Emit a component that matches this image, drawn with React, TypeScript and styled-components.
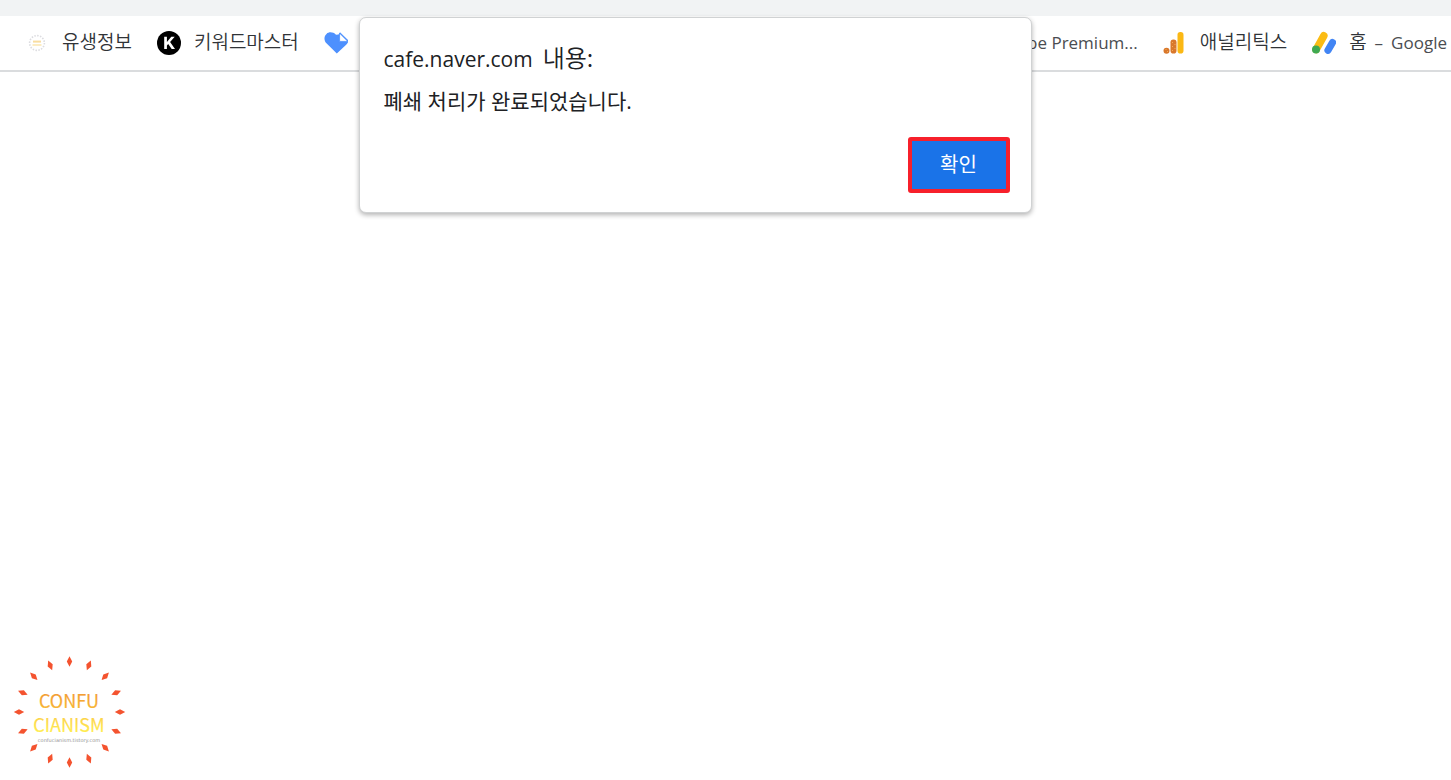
import React from "react";
import styled, { createGlobalStyle } from "styled-components";

const GlobalStyle = createGlobalStyle`
  *, *::before, *::after { box-sizing: border-box; }
  body {
    margin: 0;
    background: #ffffff;
    color: #202124;
    font-family: "Open Sans", "Noto Sans CJK KR", sans-serif;
  }
`;

const Page = styled.div`
  position: relative;
  display: flex;
  flex-direction: column;
  min-height: 100vh;
  overflow: hidden;
`;

const ToolbarEdge = styled.div`
  height: 16px;
  background: #f1f3f4;
`;

const BookmarkBar = styled.nav`
  display: flex;
  justify-content: space-between;
  align-items: center;
  height: 56px;
  padding: 0 4px 0 25px;
  border-bottom: 2px solid #dadcde;
`;

const BookmarkGroup = styled.div`
  display: flex;
  align-items: center;
  gap: 25px;
`;

const Bookmark = styled.a`
  display: flex;
  align-items: center;
  gap: 13px;
  color: #4a4d51;
  font-size: 17px;
  font-weight: 400;
  line-height: 24px;
  text-decoration: none;
  white-space: nowrap;
`;

const Korean = styled.span`
  padding-bottom: 4px;
  color: #303337;
  font-family: "Noto Sans CJK KR", sans-serif;
  font-size: 19px;
  font-weight: 350;
`;

const MixedLabel = styled.span`
  display: flex;
  align-items: center;
  gap: 8px;
`;

const Icon = styled.svg`
  display: block;
  flex: none;
  width: 24px;
  height: 24px;
`;

const Dialog = styled.section`
  position: absolute;
  top: 17px;
  left: calc(50% - 367px);
  width: 673px;
  max-width: 100%;
  padding: 24px 21px 19px 24px;
  background: #ffffff;
  border: 1px solid #d0d2d3;
  border-radius: 7px;
  box-shadow: 0 2px 5px rgba(0, 0, 0, 0.3);
`;

const DialogTitle = styled.h1`
  display: flex;
  align-items: baseline;
  gap: 10px;
  height: 30px;
  margin: 0 0 14px;
  font-size: 21px;
  font-weight: 400;
  line-height: 30px;
`;

const TitleKorean = styled.span`
  font-family: "Noto Sans CJK KR", sans-serif;
  font-size: 24px;
  font-weight: 350;
`;

const DialogMessage = styled.p`
  margin: 0 0 21px;
  font-size: 21px;
  font-weight: 400;
  line-height: 30px;
`;

const DialogActions = styled.div`
  display: flex;
  justify-content: flex-end;
`;

const ConfirmButton = styled.button`
  width: 102px;
  height: 56px;
  padding: 0 0 2px;
  border: 4px solid #f7202b;
  border-radius: 3px;
  background: #1a73e8;
  color: #ffffff;
  font-family: "Noto Sans CJK KR", sans-serif;
  font-size: 20px;
  font-weight: 400;
  line-height: 28px;
  cursor: pointer;
`;

const Content = styled.main`
  flex: 1;
`;

const Footer = styled.footer`
  padding: 0 9px 8px;
`;

const Logo = styled.svg`
  display: block;
  width: 120px;
  height: 120px;
`;

const rays = Array.from({ length: 16 }, (_, i) => i * 22.5);

function SealIcon() {
  return (
    <Icon viewBox="0 0 24 24" aria-hidden="true">
      <circle cx="12" cy="12" r="7.4" fill="none" stroke="#dcdce0" strokeWidth="1.6" strokeDasharray="1.5 1.4" />
      <path d="M8 10.600h8" stroke="#f9dda0" strokeWidth="2" />
      <path d="M7.500 14h9" stroke="#fbe8b4" strokeWidth="1.6" />
    </Icon>
  );
}

function KeywordIcon() {
  return (
    <Icon viewBox="0 0 24 24" aria-hidden="true">
      <circle cx="12" cy="12" r="12" fill="#000" />
      <path d="M7.200 5.800h2.700v5.100L14.300 5.800h3.400l-4.600 5.300L18 18h-3.300l-3.500-4.900-1.300 1.400V18H7.200z" fill="#fff" />
    </Icon>
  );
}

function HeartIcon() {
  return (
    <Icon viewBox="0 0 24 24" aria-hidden="true">
      <path
        d="M12.800 22.500 2.700 12.500C-.3 9.500-.2 5.200 2.500 2.900c2.600-2.300 6.500-2 9.500.8L14.500 3.500 16 1.200 24.400 9.500c0 1.500-.9 3.300-2.200 4.200z"
        fill="#4d90fe"
      />
      <path d="M15.600 2.200v8.200h8.200z" fill="#fff" stroke="#4d90fe" strokeWidth="0.8" strokeLinejoin="round" />
    </Icon>
  );
}

function AnalyticsIcon() {
  return (
    <Icon viewBox="0 0 24 24" aria-hidden="true">
      <rect x="14.500" y="1" width="6" height="21.500" rx="2.800" fill="#fbb814" />
      <rect x="7.500" y="8.500" width="6" height="14" rx="2.800" fill="#d9772b" />
      <circle cx="3.500" cy="19.700" r="3" fill="#d9772b" />
      <path
        d="M9 11.500h1M11.500 13.500h1M9 15.500h1M11.500 17.500h1M9 19.500h1M2.500 18.500h1M4 20.500h1"
        stroke="#f3ad55"
        strokeWidth="1"
      />
    </Icon>
  );
}

function AdSenseIcon() {
  return (
    <Icon viewBox="0 0 24 24" aria-hidden="true">
      <path d="M4.200 18.500 11.800 4.800" stroke="#fbbc14" strokeWidth="7.600" strokeLinecap="round" />
      <path d="M16 19.300 20.500 11.500" stroke="#4285f4" strokeWidth="7.200" strokeLinecap="round" />
      <circle cx="4" cy="18.500" r="4" fill="#3fa951" />
    </Icon>
  );
}

function ConfucianismLogo() {
  return (
    <Logo viewBox="0 0 120 120" role="img" aria-label="Confucianism">
      <defs>
        <linearGradient id="amber" x1="0" y1="0" x2="0" y2="1">
          <stop offset="0.2" stopColor="#f29a35" />
          <stop offset="0.8" stopColor="#f7b533" />
        </linearGradient>
        <linearGradient id="yellow" x1="0" y1="0" x2="0" y2="1">
          <stop offset="0.2" stopColor="#fbd04a" />
          <stop offset="0.8" stopColor="#ffec4f" />
        </linearGradient>
      </defs>
      {rays.map((angle) => (
        <path
          key={angle}
          d="M60.500 4.300 63.200 9.500 60.500 14.700 57.800 9.500z"
          fill="#f4532f"
          transform={`rotate(${angle} 60.500 60)`}
        />
      ))}
      <g
        textAnchor="middle"
        fontFamily="'Noto Sans CJK KR', sans-serif"
        fontSize="18"
        fontWeight="400"
        strokeWidth="0.200"
      >
        <text x="60" y="56" fill="url(#amber)" stroke="url(#amber)">CONFU</text>
        <text x="60" y="80" fill="url(#yellow)" stroke="url(#yellow)">CIANISM</text>
      </g>
      <text x="60" y="90" textAnchor="middle" fontFamily="'DejaVu Sans', sans-serif" fontSize="5" fill="#949494">
        confucianism.tistory.com
      </text>
    </Logo>
  );
}

export default function App() {
  return (
    <Page>
      <GlobalStyle />
      <ToolbarEdge />
      <BookmarkBar>
        <BookmarkGroup>
          <Bookmark href="#info">
            <SealIcon />
            <Korean>유생정보</Korean>
          </Bookmark>
          <Bookmark href="#keyword">
            <KeywordIcon />
            <Korean>키워드마스터</Korean>
          </Bookmark>
          <Bookmark href="#heart" aria-label="하트">
            <HeartIcon />
          </Bookmark>
        </BookmarkGroup>
        <BookmarkGroup>
          <Bookmark href="#premium">YouTube Premium...</Bookmark>
          <Bookmark href="#analytics">
            <AnalyticsIcon />
            <Korean>애널리틱스</Korean>
          </Bookmark>
          <Bookmark href="#google">
            <AdSenseIcon />
            <MixedLabel>
              <Korean>홈</Korean>
              <span>–</span>
              <span>Google</span>
            </MixedLabel>
          </Bookmark>
        </BookmarkGroup>
      </BookmarkBar>
      <Content>
        <Dialog role="alertdialog" aria-labelledby="dialog-title" aria-describedby="dialog-message">
          <DialogTitle id="dialog-title">
            <span>cafe.naver.com</span>
            <TitleKorean>내용:</TitleKorean>
          </DialogTitle>
          <DialogMessage id="dialog-message">폐쇄 처리가 완료되었습니다.</DialogMessage>
          <DialogActions>
            <ConfirmButton type="button">확인</ConfirmButton>
          </DialogActions>
        </Dialog>
      </Content>
      <Footer>
        <ConfucianismLogo />
      </Footer>
    </Page>
  );
}
